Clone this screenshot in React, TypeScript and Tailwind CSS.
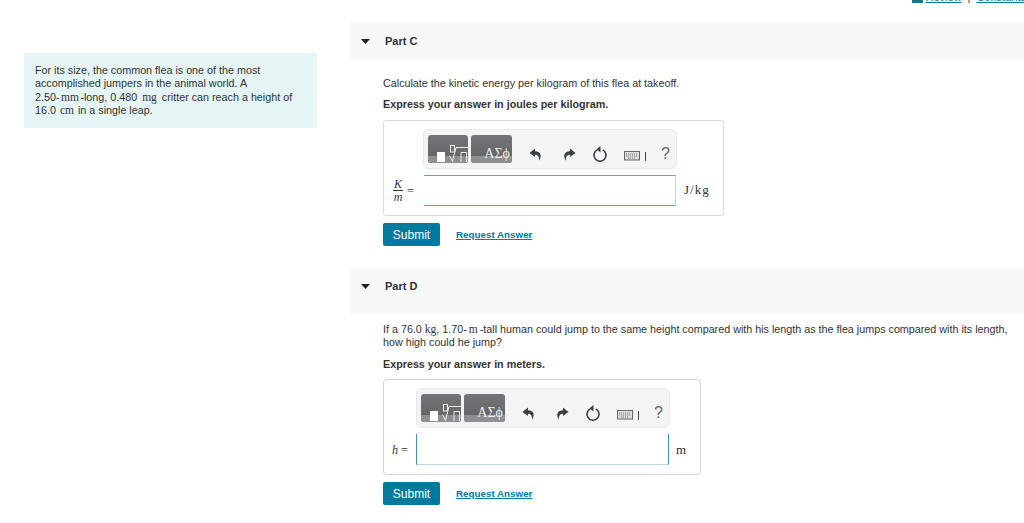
const sans = "font-['Liberation_Sans',Arial,sans-serif]";

function Caret() {
  return (
    <svg width="9" height="5" viewBox="0 0 9 5" className="shrink-0">
      <path d="M0 0H9L4.5 5Z" fill="#222" />
    </svg>
  );
}

function ArrowIcon({ flip }: { flip?: boolean }) {
  return (
    <svg width="13" height="13" viewBox="0 0 13 13" className={flip ? "-scale-x-100" : ""}>
      <path d="M6 0.5L0.5 5L6 9V6.8C8.8 6.8 10 8 10.3 12.8C12.8 8 12.2 3.4 6 3.2Z" fill="#3a3f44" />
    </svg>
  );
}

function Toolbar() {
  return (
    <div className="flex h-[40px] w-[254px] items-center rounded-md border border-[#e8e8e8] bg-[#f4f4f4] pl-[4px]">
      <div className="relative h-[28px] w-[40px] overflow-hidden rounded-[3px] bg-gradient-to-b from-[#757577] to-[#626264]">
        <div className="absolute bottom-0 left-0 right-0 h-[7px] bg-[#8f8f91]" />
        <div className="absolute bottom-[1px] left-[9px] h-[10px] w-[8px] bg-white" />
        <svg width="19" height="17" viewBox="0 0 19 17" className="absolute left-[21px] top-[10px]" fill="none" stroke="#ececec" strokeWidth="1">
          <rect x="1.5" y="0.5" width="4" height="6.5" />
          <path d="M0.5 10.5L3.5 16.5L7 2.5H19M12 17V7.5H17.5V17" />
        </svg>
      </div>
      <div className="relative ml-[3px] flex h-[28px] w-[41px] items-end justify-end overflow-hidden rounded-[3px] bg-gradient-to-b from-[#757577] to-[#626264] pb-[1px] pr-[2px] font-['Liberation_Serif',serif] text-[14px] leading-[16px] text-[#f0f0f0]">
        <div className="absolute bottom-0 left-0 right-0 h-[7px] bg-[#8f8f91]" />
        <span className="relative">ΑΣϕ</span>
      </div>
      <div className="ml-[17px] mt-[10px] flex"><ArrowIcon /></div>
      <div className="ml-[21px] mt-[10px] flex"><ArrowIcon flip /></div>
      <svg width="16" height="16" viewBox="0 0 16 16" className="ml-[16px] mt-[9px]" fill="none">
        <path d="M5.2 3.9A6 6 0 1 0 10.8 3.9" stroke="#3a3f44" strokeWidth="1.6" />
        <path d="M8.5 0V6.5L4.5 3.2Z" fill="#3a3f44" />
      </svg>
      <svg width="24" height="11" viewBox="0 0 24 11" className="ml-[16px] mt-[12px]" fill="none">
        <rect x="0.5" y="1.5" width="15" height="8.5" fill="#ddd" stroke="#666" />
        <path d="M2 4H14M2 6H14M4 8H12" stroke="#777" strokeWidth="1" strokeDasharray="1 1" />
        <path d="M21.5 2V11" stroke="#444" />
      </svg>
      <span className={`${sans} ml-[13px] mt-[9px] text-[16px] leading-[18px] text-[#666]`}>?</span>
    </div>
  );
}

function Part({ name, h }: { name: string; h: string }) {
  return (
    <div className={`flex items-center bg-[#f8f8f8] pl-[11px] ${h}`}>
      <Caret />
      <span className="ml-[15px] text-[11px] font-bold text-[#333]">{name}</span>
    </div>
  );
}

function Actions() {
  return (
    <div className="flex items-center">
      <div className="flex h-[23px] w-[57px] items-center justify-center rounded-[2px] bg-[#007b9e] text-[12px] text-white">Submit</div>
      <span className="ml-[16px] mt-[1px] text-[9.8px] font-bold text-[#007b9e] underline">Request Answer</span>
    </div>
  );
}

export default function App() {
  return (
    <div className={`${sans} flex h-[523px] w-[1024px] overflow-hidden bg-white text-[#333]`}>
      <div className="ml-[24px] mt-[53px] h-[75px] w-[293px] shrink-0 bg-[#e5f5f6] px-[11px] pt-[11px] text-[10.75px] leading-[13.4px]">
        For its size, the common flea is one of the most accomplished jumpers in the animal world. A<br />
        2.50-<span className="px-[1.5px] font-['Liberation_Serif',serif] text-[11.5px]">mm</span>-long, 0.480 <span className="px-[2px] font-['Liberation_Serif',serif] text-[11.5px]">mg</span> critter can reach a height of<br />
        16.0 <span className="px-[1px] font-['Liberation_Serif',serif] text-[11.5px]">cm</span> in a single leap.
      </div>
      <div className="ml-[33px] flex min-w-0 flex-1 flex-col">
        <div className="flex h-[3px] items-end justify-end overflow-hidden whitespace-nowrap text-[11px] leading-[12px] text-[#007b9e]">
          <svg width="11" height="8" viewBox="0 0 11 8" className="mr-[3px] shrink-0"><rect width="11" height="8" fill="#1f6f8b" /></svg>
          <span className="underline">Review</span>
          <span className="mx-[6px] text-[#333]">|</span>
          <span className="-mr-[2px] underline">Constants</span>
        </div>
        <div className="mt-[19px]"><Part name="Part C" h="h-[38px]" /></div>
        <div className="pl-[33px]">
          <p className="mt-[17px] text-[10.75px] leading-[13px]">Calculate the kinetic energy per kilogram of this flea at takeoff.</p>
          <p className="mt-[8px] text-[10.75px] font-bold leading-[13px]">Express your answer in joules per kilogram.</p>
          <div className="mt-[9px] flex h-[96px] w-[341px] flex-col rounded-[3px] border border-[#dcdcdc] pl-[39px] pt-[8px]">
            <Toolbar />
            <div className="relative ml-[1px] mt-[6px] flex items-center">
              <div className="absolute -left-[31px] flex items-center font-['Liberation_Serif',serif] text-[12px] leading-[10px]">
                <div className="flex flex-col items-center">
                  <i className="border-b border-[#333] px-[1px] pb-[1px]">K</i>
                  <i className="pt-[1px]">m</i>
                </div>
                <span className="ml-[4px]">=</span>
              </div>
              <div className="h-[31px] w-[252px] border-y border-r border-y-[#5aa9bb] border-r-[#b9d7df] bg-white" />
              <span className="ml-[8px] -mt-[2px] font-['Liberation_Serif',serif] text-[13px] tracking-[1px]">J/kg</span>
            </div>
          </div>
          <div className="mt-[7px]"><Actions /></div>
        </div>
        <div className="mt-[22px]"><Part name="Part D" h="h-[46px] pb-[9px]" /></div>
        <div className="pl-[33px] pr-[10px]">
          <p className="mt-[9px] text-[10.75px] leading-[13px]">
            If a 76.0 <span className="font-['Liberation_Serif',serif] text-[11.5px]">kg</span>, 1.70-<span className="px-[2px] font-['Liberation_Serif',serif] text-[11.5px]">m</span>-tall human could jump to the same height compared with his length as the flea jumps compared with its length, how high could he jump?
          </p>
          <p className="mt-[9px] text-[10.75px] font-bold leading-[13px]">Express your answer in meters.</p>
          <div className="mt-[8px] flex h-[96px] w-[318px] flex-col rounded-[4px] border border-[#d4d4d4] pl-[32px] pt-[8px]">
            <Toolbar />
            <div className="relative mt-[6px] flex items-center">
              <div className="absolute -left-[24px] font-['Liberation_Serif',serif] text-[12px]"><i>h</i> =</div>
              <div className="h-[31px] w-[253px] border-x border-b border-x-[#3e93a9] border-b-[#b9d7df] bg-white" />
              <span className="ml-[7px] font-['Liberation_Serif',serif] text-[13px]">m</span>
            </div>
          </div>
          <div className="mt-[7px]"><Actions /></div>
        </div>
      </div>
    </div>
  );
}
